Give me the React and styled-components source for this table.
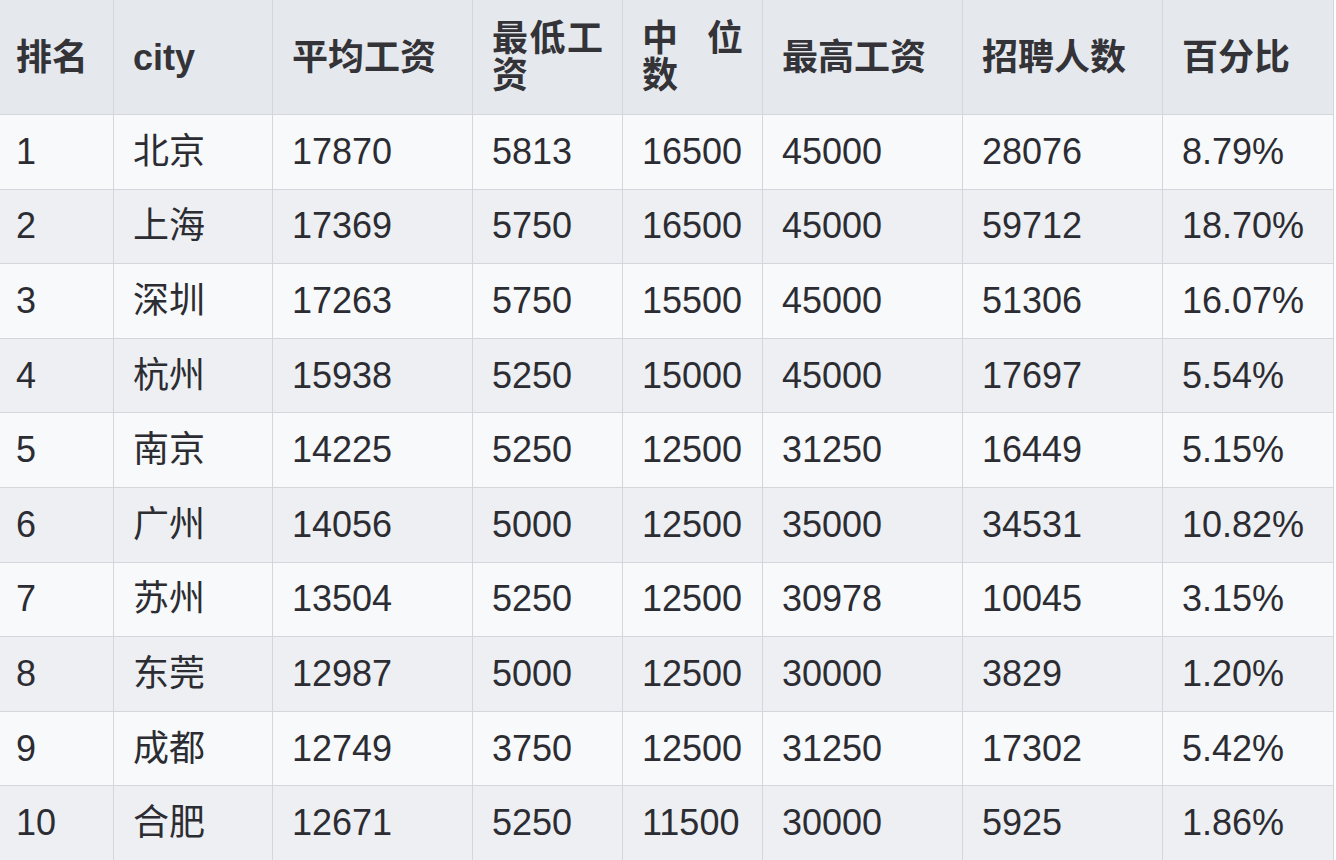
import React from "react";
import styled, { createGlobalStyle } from "styled-components";

const Global = createGlobalStyle`
  html, body { margin: 0; padding: 0; background: #ffffff; }
  body { overflow: hidden; }
`;

const Page = styled.div`
  width: 1336px;
  height: 860px;
  overflow: hidden;
  background: #ffffff;
`;

const Table = styled.table`
  width: 1337px;
  margin-left: -4px;
  border-collapse: collapse;
  table-layout: fixed;
  font-family: "Liberation Sans", "Noto Sans CJK SC", Arial, sans-serif;
  font-size: 36px;
  color: #2c2c33;
`;

const HeadCell = styled.th`
  height: 114px;
  padding: 0 19px;
  background: #e5e8ed;
  border: 1px solid #d3d6db;
  border-top: none;
  font-weight: bold;
  text-align: justify;
  line-height: 37px;
  vertical-align: middle;
  color: #333338;
`;

const Row = styled.tr`
  background: ${(p) => (p.$alt ? "#edeff2" : "#f8f9fb")};
`;

const Cell = styled.td`
  height: 73.6px;
  padding: 0 19px;
  border: 1px solid #d3d6db;
  text-align: left;
  vertical-align: middle;
  white-space: nowrap;
  line-height: 40px;
`;

const widths = [117, 159, 200, 150, 140, 200, 200, 171];
const headers = ["排名", "city", "平均工资", "最低工资", "中位数", "最高工资", "招聘人数", "百分比"];

const rows = [
  ["1", "北京", "17870", "5813", "16500", "45000", "28076", "8.79%"],
  ["2", "上海", "17369", "5750", "16500", "45000", "59712", "18.70%"],
  ["3", "深圳", "17263", "5750", "15500", "45000", "51306", "16.07%"],
  ["4", "杭州", "15938", "5250", "15000", "45000", "17697", "5.54%"],
  ["5", "南京", "14225", "5250", "12500", "31250", "16449", "5.15%"],
  ["6", "广州", "14056", "5000", "12500", "35000", "34531", "10.82%"],
  ["7", "苏州", "13504", "5250", "12500", "30978", "10045", "3.15%"],
  ["8", "东莞", "12987", "5000", "12500", "30000", "3829", "1.20%"],
  ["9", "成都", "12749", "3750", "12500", "31250", "17302", "5.42%"],
  ["10", "合肥", "12671", "5250", "11500", "30000", "5925", "1.86%"],
];

export default function App() {
  return (
    <Page>
      <Global />
      <Table>
        <colgroup>
          {widths.map((w, i) => (
            <col key={i} style={{ width: w }} />
          ))}
        </colgroup>
        <thead>
          <tr>
            {headers.map((h) => (
              <HeadCell key={h}>{h}</HeadCell>
            ))}
          </tr>
        </thead>
        <tbody>
          {rows.map((r, i) => (
            <Row key={r[0]} $alt={i % 2 === 1}>
              {r.map((c, j) => (
                <Cell key={j}>{c}</Cell>
              ))}
            </Row>
          ))}
        </tbody>
      </Table>
    </Page>
  );
}
